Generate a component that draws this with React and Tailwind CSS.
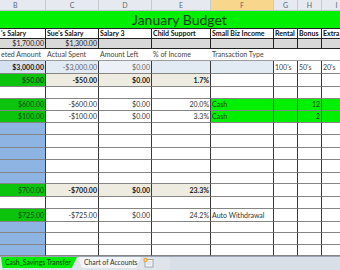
import React from 'react';

const W = ['w-[46px]', 'w-[53px]', 'w-[53px]', 'w-[59px]', 'w-[63px]', 'w-[24px]', 'w-[24px]', 'w-[30px]'];
const LETTERS = ['B', 'C', 'D', 'E', 'F', 'G', 'H', 'I'];

const DG = 'bg-[#0dc40d]';
const LG = 'bg-[#00f000]';
const BL = 'bg-[#8db4e2]';
const BE = 'bg-[#eeece1]';
const GT = 'text-[#124a12]';

const blueRow = { h: 'h-[12px]', cells: [{ bg: BL }, {}, {}, {}, {}, {}, {}, {}] };
const blankRow = (h) => ({ h, cells: [{}, {}, {}, {}, {}, {}, {}, {}] });

const rows = [
  {
    h: 'h-[13px]',
    cells: [
      { t: '$3,000.00', r: 1, bg: 'bg-[#d5e1f0]', c: 'font-bold text-[#222]' },
      { t: '-$3,000.00', r: 1, bg: 'bg-[#e2eaf4]', c: 'text-[#666]' },
      { t: '$0.00', r: 1, bg: 'bg-[#edf1f7]', c: 'text-[#666]' },
      { bg: 'bg-[#e2eaf4]' },
      { bg: 'bg-[#e2eaf4]' },
      { t: "100's", c: 'text-[#444]' },
      { t: "50's", c: 'text-[#444]' },
      { t: "20's", c: 'text-[#444]' },
    ],
  },
  {
    h: 'h-[13px]',
    cells: [
      { t: '$50.00', r: 1, bg: DG, c: 'font-bold ' + GT },
      { t: '-$50.00', r: 1, bg: BE, c: 'font-bold text-[#222]' },
      { t: '$0.00', r: 1, bg: BE, c: 'font-bold text-[#222]' },
      { t: '1.7%', r: 1, bg: BE, c: 'font-bold text-[#222]' },
      {}, {}, {}, {},
    ],
  },
  blankRow('h-[12px]'),
  {
    h: 'h-[12px]',
    cells: [
      { t: '$600.00', r: 1, bg: DG, c: GT },
      { t: '-$600.00', r: 1, c: 'text-[#333]' },
      { t: '$0.00', r: 1, c: 'text-[#333]' },
      { t: '20.0%', r: 1, c: 'text-[#333]' },
      { t: 'Cash', bg: LG, c: 'text-[#1f3f1f]' },
      { bg: LG },
      { t: '12', r: 1, bg: LG, c: 'text-[#1f3f1f]' },
      { bg: LG },
    ],
  },
  {
    h: 'h-[12px]',
    cells: [
      { t: '$100.00', r: 1, bg: DG, c: GT },
      { t: '-$100.00', r: 1, c: 'text-[#333]' },
      { t: '$0.00', r: 1, c: 'text-[#333]' },
      { t: '3.3%', r: 1, c: 'text-[#333]' },
      { t: 'Cash', bg: LG, c: 'text-[#1f3f1f]' },
      { bg: LG },
      { t: '2', r: 1, bg: LG, c: 'text-[#1f3f1f]' },
      { bg: LG },
    ],
  },
  { ...blueRow, h: 'h-[12px]' },
  { ...blueRow, h: 'h-[13px]' },
  { ...blueRow, h: 'h-[12px]' },
  { ...blueRow, h: 'h-[13px]' },
  { ...blueRow, h: 'h-[11px]' },
  {
    h: 'h-[13px]',
    cells: [
      { t: '$700.00', r: 1, bg: DG, c: GT },
      { t: '-$700.00', r: 1, bg: BE, c: 'font-bold text-[#222]' },
      { t: '$0.00', r: 1, bg: BE, c: 'font-bold text-[#222]' },
      { t: '23.3%', r: 1, bg: BE, c: 'font-bold text-[#222]' },
      {}, {}, {}, {},
    ],
  },
  blankRow('h-[12px]'),
  {
    h: 'h-[13px]',
    cells: [
      { t: '$725.00', r: 1, bg: DG, c: GT },
      { t: '-$725.00', r: 1, c: 'text-[#333]' },
      { t: '$0.00', r: 1, c: 'text-[#333]' },
      { t: '24.2%', r: 1, c: 'text-[#333]' },
      { t: 'Auto Withdrawal', c: 'text-[#333]' },
      {}, {}, {},
    ],
  },
  { ...blueRow, h: 'h-[11px]' },
  { ...blueRow, h: 'h-[12px]' },
  { ...blueRow, h: 'h-[11px]' },
];

function DataRow({ row }) {
  return (
    <div className={'flex ' + row.h}>
      {row.cells.map((c, i) => (
        <div
          key={i}
          className={
            'shrink-0 overflow-hidden whitespace-nowrap border-r border-b border-r-[#3a3a3a] border-b-[#858585] px-[1px] text-[7px] flex items-center ' +
            W[i] + ' ' + (c.bg || 'bg-white') + ' ' + (c.r ? 'justify-end ' : 'justify-start ') + (c.c || '')
          }
        >
          {c.t}
        </div>
      ))}
    </div>
  );
}

function NewSheetIcon() {
  return (
    <svg width="14" height="11" viewBox="0 0 14 11">
      <rect x="4" y="2.5" width="8" height="7.5" fill="#f4f6fa" stroke="#8a97aa" strokeWidth="0.8" />
      <line x1="5.5" y1="5" x2="10.5" y2="5" stroke="#b9c3d1" strokeWidth="0.6" />
      <line x1="5.5" y1="7" x2="10.5" y2="7" stroke="#b9c3d1" strokeWidth="0.6" />
      <circle cx="4.5" cy="3" r="2.2" fill="#f2a531" />
      <circle cx="4.5" cy="3" r="1" fill="#ffe28a" />
    </svg>
  );
}

export default function App() {
  return (
    <div className="w-[340px] h-[270px] overflow-hidden bg-white font-['Lato',_'Liberation_Sans',_sans-serif] leading-none">
      {/* column header */}
      <div className="flex h-[11px] bg-[#e6eaf0] border-b border-[#b8c0cc]">
        {LETTERS.map((l, i) => (
          <div
            key={l}
            className={
              'shrink-0 flex items-center border-r border-[#c4cad4] text-[7px] text-[#5b6577] ' +
              W[i] + ' ' + (l === 'F' ? 'bg-[#f8d68c] ' : '') + (l === 'B' ? 'justify-start pl-[13px]' : 'justify-center')
            }
          >
            {l}
          </div>
        ))}
      </div>
      {/* title */}
      <div className="h-[17px] bg-[#00f000] flex items-center pl-[132px] text-[14px] text-[#103c14] whitespace-nowrap">
        January Budget
      </div>
      {/* salary labels */}
      <div className="flex h-[11px] border-t border-b border-[#222]">
        {["'s Salary", "Sue's Salary", 'Salary 3', 'Child Support', 'Small Biz Income', 'Rental', 'Bonus', 'Extra'].map((t, i) => (
          <div
            key={i}
            className={'shrink-0 overflow-hidden whitespace-nowrap flex items-center px-[1px] border-r border-[#222] bg-white text-[7px] font-bold text-[#111] ' + W[i]}
          >
            {t}
          </div>
        ))}
      </div>
      {/* gray amounts */}
      <div className="flex h-[10px] border-b border-[#222]">
        {['$1,700.00', '$1,300.00', '', '', '', '', '', ''].map((t, i) => (
          <div
            key={i}
            className={'shrink-0 overflow-hidden whitespace-nowrap flex items-center justify-end px-[1px] border-r border-[#222] bg-[#d9d9d9] text-[7px] text-[#222] ' + W[i]}
          >
            {t}
          </div>
        ))}
      </div>
      {/* sub header */}
      <div className="flex h-[12px] border-b border-[#9a9a9a]">
        {['eted Amount', 'Actual Spent', 'Amount Left', '% of Income', 'Transaction Type', '', '', ''].map((t, i) => (
          <div
            key={i}
            className={'shrink-0 overflow-hidden whitespace-nowrap flex items-center px-[1px] bg-white text-[7px] text-[#444] ' + W[i]}
          >
            {t}
          </div>
        ))}
      </div>
      {rows.map((r, i) => (
        <DataRow key={i} row={r} />
      ))}
      {/* sheet tabs */}
      <div className="flex h-[14px] bg-[#dfe4ea] border-t border-[#9aa4b2]">
        <div className="flex items-start w-[170px] shrink-0">
          <div className="ml-[1px] h-[11px] w-[76px] shrink-0 bg-[#00ec00] flex items-center pl-[4px] text-[6.8px] text-[#123a12] whitespace-nowrap [clip-path:polygon(0_0,100%_0,93%_100%,2%_100%)]">
            Cash_Savings Transfer
          </div>
          <div className="ml-[1px] h-[11px] w-[63px] shrink-0 bg-[#f2f4f7] flex items-center pl-[6px] text-[6.8px] text-[#333] whitespace-nowrap [clip-path:polygon(0_0,100%_0,92%_100%,6%_100%)]">
            Chart of Accounts
          </div>
          <div className="h-[11px] flex items-center">
            <NewSheetIcon />
          </div>
        </div>
        <div className="flex-1 bg-[#d9dfe7]" />
      </div>
    </div>
  );
}
